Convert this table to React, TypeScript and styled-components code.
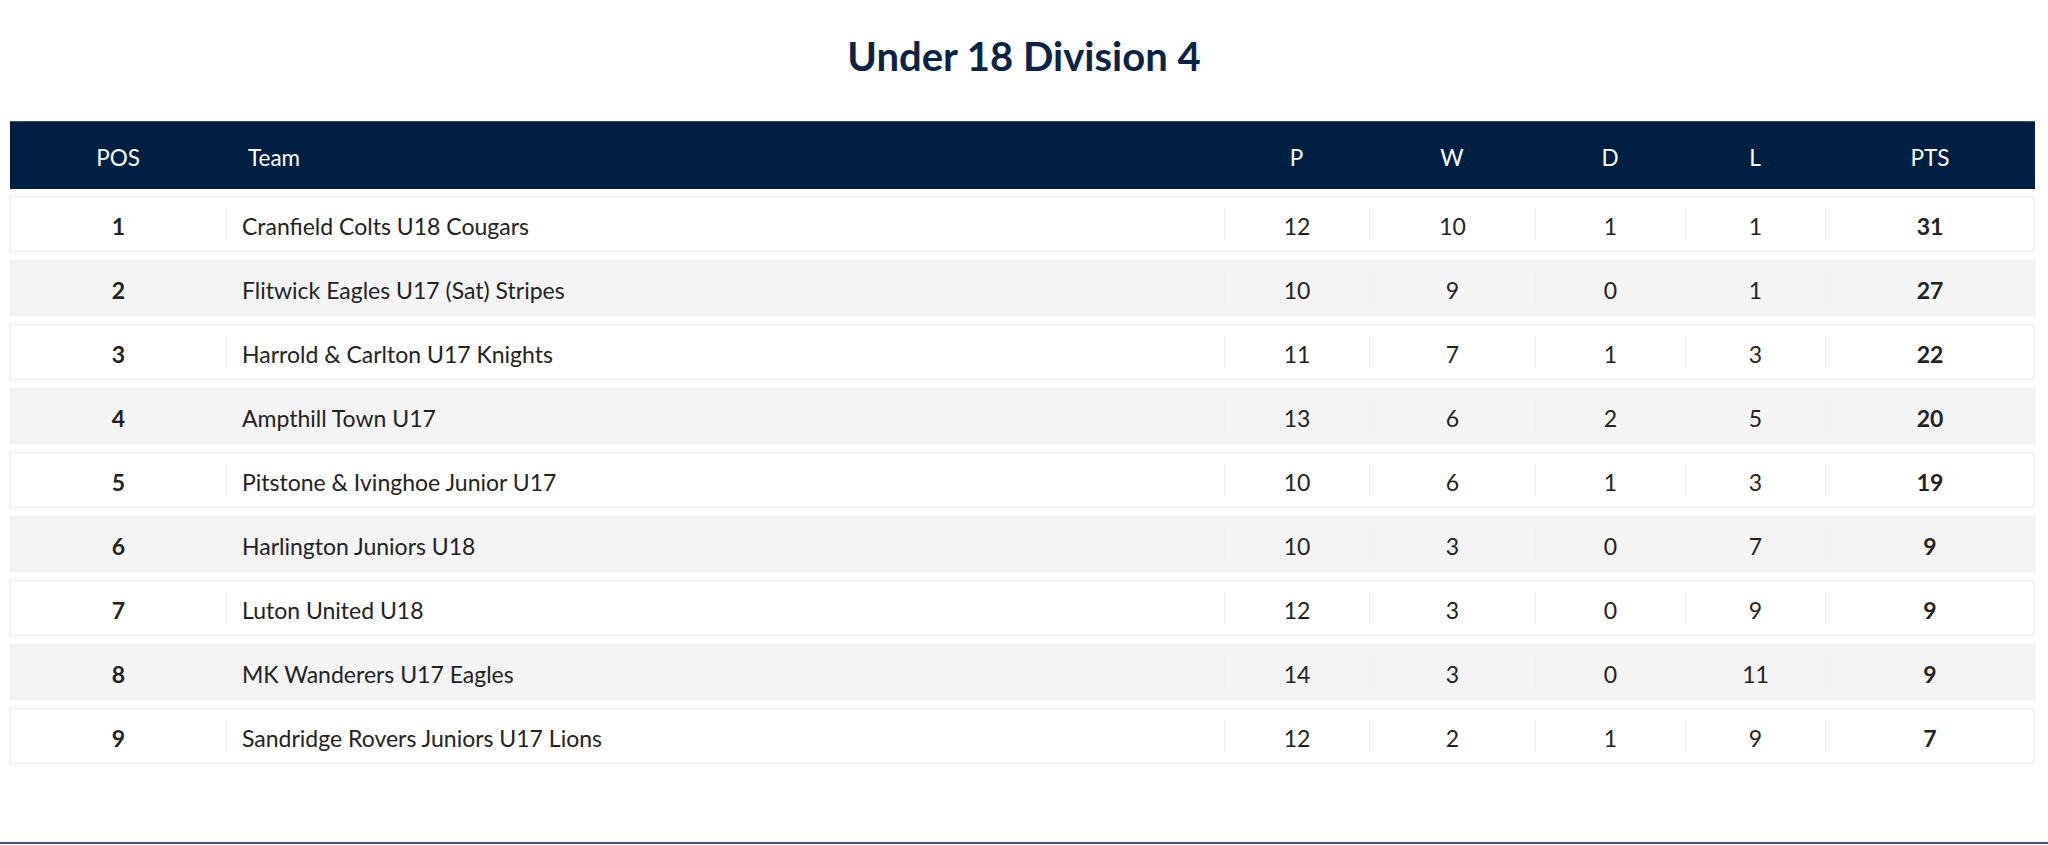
import React from 'react'
import styled, { createGlobalStyle } from 'styled-components'

const GlobalStyle = createGlobalStyle`
  html, body {
    margin: 0;
    padding: 0;
    background: #ffffff;
  }
  body {
    font-family: Lato, "Open Sans", sans-serif;
    color: #222222;
  }
`

type Team = {
  pos: number
  name: string
  p: number
  w: number
  d: number
  l: number
  pts: number
}

const teams: Team[] = [
  { pos: 1, name: 'Cranfield Colts U18 Cougars', p: 12, w: 10, d: 1, l: 1, pts: 31 },
  { pos: 2, name: 'Flitwick Eagles U17 (Sat) Stripes', p: 10, w: 9, d: 0, l: 1, pts: 27 },
  { pos: 3, name: 'Harrold & Carlton U17 Knights', p: 11, w: 7, d: 1, l: 3, pts: 22 },
  { pos: 4, name: 'Ampthill Town U17', p: 13, w: 6, d: 2, l: 5, pts: 20 },
  { pos: 5, name: 'Pitstone & Ivinghoe Junior U17', p: 10, w: 6, d: 1, l: 3, pts: 19 },
  { pos: 6, name: 'Harlington Juniors U18', p: 10, w: 3, d: 0, l: 7, pts: 9 },
  { pos: 7, name: 'Luton United U18', p: 12, w: 3, d: 0, l: 9, pts: 9 },
  { pos: 8, name: 'MK Wanderers U17 Eagles', p: 14, w: 3, d: 0, l: 11, pts: 9 },
  { pos: 9, name: 'Sandridge Rovers Juniors U17 Lions', p: 12, w: 2, d: 1, l: 9, pts: 7 },
]

const columns = '215px 998px 145px 166px 150px 140px 209px'

const App: React.FC = () => {
  return (
    <>
      <GlobalStyle />
      <Page>
        <Title>Under 18 Division 4</Title>
        <Table>
          <HeaderRow>
            <HeadCell>POS</HeadCell>
            <HeadCell $left>Team</HeadCell>
            <HeadCell>P</HeadCell>
            <HeadCell>W</HeadCell>
            <HeadCell>D</HeadCell>
            <HeadCell>L</HeadCell>
            <HeadCell>PTS</HeadCell>
          </HeaderRow>
          <Body>
            {teams.map((t, i) => (
              <Row key={t.pos} $striped={i % 2 === 1}>
                <Cell $bold $first>{t.pos}</Cell>
                <Cell $left>{t.name}</Cell>
                <Cell>{t.p}</Cell>
                <Cell>{t.w}</Cell>
                <Cell>{t.d}</Cell>
                <Cell>{t.l}</Cell>
                <Cell $bold>{t.pts}</Cell>
              </Row>
            ))}
          </Body>
        </Table>
        <Rule />
      </Page>
    </>
  )
}

const Page = styled.div`
  display: flex;
  flex-direction: column;
  height: 845px;
  box-sizing: border-box;
`

const Title = styled.h1`
  margin: 0;
  padding-top: 33px;
  font-family: Lato, sans-serif;
  font-size: 40px;
  line-height: 46px;
  font-weight: 700;
  color: #0b2347;
  text-align: center;
`

const Table = styled.div`
  margin: 42px 13px 0 10px;
`

const HeaderRow = styled.div`
  display: grid;
  grid-template-columns: 216px 998px 145px 166px 150px 140px 210px;
  height: 68px;
  background: #011f43;
  border-top: 1px solid #3b5274;
  box-sizing: border-box;
`

const HeadCell = styled.div<{ $left?: boolean }>`
  display: flex;
  align-items: center;
  justify-content: ${p => (p.$left ? 'flex-start' : 'center')};
  padding: 3px 0 0 ${p => (p.$left ? '22px' : '0')};
  color: #ffffff;
  font-size: 22.5px;
  font-weight: 400;
`

const Body = styled.div`
  display: flex;
  flex-direction: column;
  gap: 8px;
  margin-top: 7px;
`

const Row = styled.div<{ $striped?: boolean }>`
  display: grid;
  grid-template-columns: ${columns};
  height: 56px;
  box-sizing: border-box;
  padding: 11px 0;
  background: ${p => (p.$striped ? '#f4f4f4' : '#ffffff')};
  border: 1px solid ${p => (p.$striped ? '#efefef' : '#ebebeb')};
`

const Cell = styled.div<{ $left?: boolean; $bold?: boolean; $first?: boolean }>`
  display: flex;
  align-items: center;
  justify-content: ${p => (p.$left ? 'flex-start' : 'center')};
  padding: 3px 0 0 ${p => (p.$left ? '15px' : '0')};
  border-left: ${p => (p.$first ? 'none' : '1px solid #ededed')};
  font-size: 23px;
  font-weight: ${p => (p.$bold ? 700 : 400)};
  color: #222222;
`

const Rule = styled.div`
  margin-top: auto;
  margin-bottom: 1px;
  height: 2px;
  background: #3e5473;
`

export default App
